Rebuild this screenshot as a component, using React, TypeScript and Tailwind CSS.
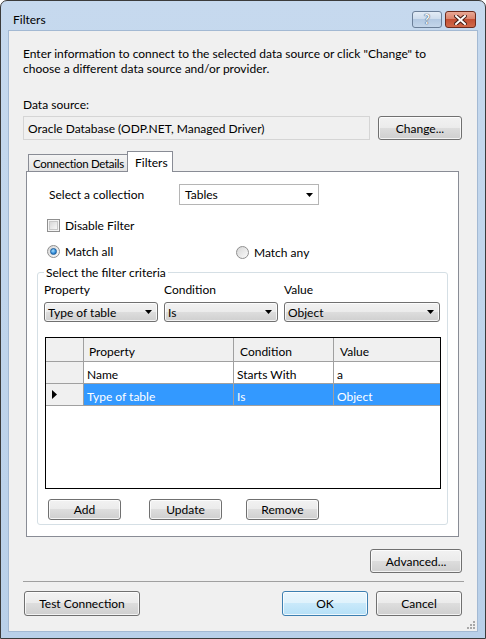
import type { ReactNode } from "react";

function Arrow() {
  return (
    <svg width="7" height="4" viewBox="0 0 7 4" className="shrink-0">
      <path d="M0 0H7L3.5 4Z" fill="#000" />
    </svg>
  );
}

function Button({
  children,
  className = "",
  primary = false,
}: {
  children: ReactNode;
  className?: string;
  primary?: boolean;
}) {
  return (
    <div
      className={`flex shrink-0 items-center justify-center rounded-[3px] border text-[12px] text-black shadow-[inset_0_0_0_1px_rgba(255,255,255,0.75)] ${
        primary
          ? "border-[#3c7fb1] bg-[image:linear-gradient(#eaf6fd_0%,#dff2fc_50%,#c9e9fa_50%,#b6e0f7_100%)]"
          : "border-[#707070] bg-[image:linear-gradient(#f2f2f2_0%,#ebebeb_50%,#dddddd_50%,#cfcfcf_100%)]"
      } ${className}`}
    >
      {children}
    </div>
  );
}

function DropButton({ value, className = "" }: { value: string; className?: string }) {
  return (
    <div
      className={`flex h-[20px] shrink-0 items-center justify-between rounded-[3px] border border-[#707070] bg-[image:linear-gradient(#f2f2f2_0%,#ebebeb_50%,#dddddd_50%,#cfcfcf_100%)] pl-[3px] pr-[5px] shadow-[inset_0_0_0_1px_rgba(255,255,255,0.75)] ${className}`}
    >
      <span>{value}</span>
      <Arrow />
    </div>
  );
}

function Check() {
  return (
    <div className="flex h-[13px] w-[13px] shrink-0 items-center justify-center border border-[#8f8f8f] bg-[#f4f4f4]">
      <div className="h-[9px] w-[9px] border border-[#c8c8c8] bg-[image:linear-gradient(135deg,#d8d8d8,#f7f7f7)]" />
    </div>
  );
}

function Radio({ on = false }: { on?: boolean }) {
  return (
    <div className="flex h-[13px] w-[13px] shrink-0 items-center justify-center rounded-full border border-[#8f8f8f] bg-[image:linear-gradient(135deg,#d6d6d6,#fbfbfb)]">
      {on && (
        <div className="h-[7px] w-[7px] rounded-full border border-[#1f5f9c] bg-[image:radial-gradient(circle_at_40%_35%,#a8e0ff,#2f8ad8_60%,#1c5fa6)]" />
      )}
    </div>
  );
}

export default function App() {
  return (
    <div className="h-[639px] w-[486px] bg-white font-[Lato,'Liberation_Sans',sans-serif] text-[12px] leading-[15px] text-black">
      <div className="flex h-[639px] w-[486px] flex-col rounded-t-[7px] border border-[#3b3b3b] bg-[image:linear-gradient(#c6d9ee,#b9d0e9)]">
        {/* title bar */}
        <div className="flex h-[30px] shrink-0 items-start justify-between pl-[12px] pr-[9px]">
          <span className="mt-[11px]">Filters</span>
          <div className="mt-[10px] flex gap-[3px]">
            <div className="flex h-[17px] w-[30px] items-center justify-center rounded-[3px] border border-[#6b7f98] bg-[image:linear-gradient(#e3ecf6_0%,#ccdbec_50%,#b3c9e2_50%,#c4d6ea_100%)] text-[13px] font-bold leading-none text-[#f4f7fb] [text-shadow:0_0_1px_#34465c,0_0_1px_#34465c]">
              ?
            </div>
            <div className="flex h-[17px] w-[31px] items-center justify-center rounded-[3px] border border-[#6d2a1c] bg-[image:linear-gradient(#e9a895_0%,#d98068_50%,#c44f33_50%,#d0694a_100%)]">
              <svg width="13" height="10" viewBox="0 0 13 10">
                <path d="M2 1L11 9M11 1L2 9" stroke="#4a2017" strokeWidth="4" strokeLinecap="square" />
                <path d="M2 1L11 9M11 1L2 9" stroke="#fff" strokeWidth="2" strokeLinecap="square" />
              </svg>
            </div>
          </div>
        </div>

        {/* client area */}
        <div className="flex flex-1 flex-col px-[8px] pb-[7px]">
          <div className="relative flex flex-1 flex-col bg-[#f0f0f0] pl-[14px] pr-[15px] pt-[15px] shadow-[0_0_0_1px_#a3b9d3]">
            <p className="h-[30px]">
              Enter information to connect to the selected data source or click "Change" to
              <br />
              choose a different data source and/or provider.
            </p>

            <div className="mt-[21px] h-[15px]">Data source:</div>
            <div className="mt-[4px] flex h-[24px] gap-[8px]">
              <div className="flex w-[347px] items-center border border-[#d5d5d5] bg-[#f0f0f0] pl-[4px]">
                Oracle Database (ODP.NET, Managed Driver)
              </div>
              <Button className="w-[84px]">Change...</Button>
            </div>

            {/* tabs */}
            <div className="ml-[3px] mt-[11px] w-[433px]">
              <div className="flex h-[20px] items-end pl-[2px]">
                <div className="flex h-[17px] w-[100px] items-center whitespace-nowrap border border-b-0 border-[#898c95] bg-[image:linear-gradient(#f4f4f4,#e2e2e2)] pl-[4px] text-[11.5px] tracking-[-0.3px]">
                  Connection Details
                </div>
                <div className="relative z-10 -mb-px -ml-px flex h-[21px] w-[46px] items-start border border-b-0 border-[#898c95] bg-white pl-[7px] pt-[3px]">
                  Filters
                </div>
              </div>

              <div className="flex h-[366px] flex-col border border-[#898c95] bg-white">
                <div className="mt-[12px] flex h-[21px] items-center pl-[22px]">
                  <span className="w-[130px]">Select a collection</span>
                  <div className="flex h-[21px] w-[140px] items-center justify-between border border-[#b5b5b5] bg-white pl-[5px] pr-[5px]">
                    <span>Tables</span>
                    <Arrow />
                  </div>
                </div>

                <div className="mt-[14px] flex h-[13px] items-center gap-[5px] pl-[20px]">
                  <Check />
                  <span>Disable Filter</span>
                </div>

                <div className="mt-[12px] flex h-[13px] items-start pl-[20px]">
                  <div className="flex w-[189px] items-center gap-[5px]">
                    <Radio on />
                    <span>Match all</span>
                  </div>
                  <div className="mt-[1px] flex items-center gap-[5px]">
                    <Radio />
                    <span>Match any</span>
                  </div>
                </div>

                {/* group box */}
                <div className="relative ml-[10px] mt-[15px] flex h-[253px] w-[411px] flex-col rounded-[3px] border border-[#d5dfe5]">
                  <span className="absolute -top-[8px] left-[6px] bg-white px-[2px]">Select the filter criteria</span>

                  <div className="mt-[9px] flex h-[15px] gap-[6px] pl-[6px]">
                    <span className="w-[114px]">Property</span>
                    <span className="w-[114px]">Condition</span>
                    <span className="w-[156px]">Value</span>
                  </div>
                  <div className="mt-[5px] flex gap-[6px] pl-[6px]">
                    <DropButton value="Type of table" className="w-[114px]" />
                    <DropButton value="Is" className="w-[114px]" />
                    <DropButton value="Object" className="w-[156px]" />
                  </div>

                  {/* data grid */}
                  <div className="ml-[7px] mt-[15px] h-[152px] w-[396px] border border-black bg-white">
                    <div className="grid h-[24px] grid-cols-[38px_150px_100px_1fr] border-b border-[#a0a0a0] bg-[#f0f0f0]">
                      <div className="border-r border-[#a0a0a0]" />
                      <div className="border-r border-[#a0a0a0] pl-[5px] pt-[6px]">Property</div>
                      <div className="border-r border-[#a0a0a0] pl-[6px] pt-[6px]">Condition</div>
                      <div className="pl-[6px] pt-[6px]">Value</div>
                    </div>
                    <div className="grid h-[22px] grid-cols-[38px_150px_100px_1fr] border-b border-[#a0a0a0]">
                      <div className="border-r border-[#a0a0a0] bg-[#f0f0f0]" />
                      <div className="border-r border-[#a0a0a0] pl-[3px] pt-[5px]">Name</div>
                      <div className="border-r border-[#a0a0a0] pl-[3px] pt-[5px]">Starts With</div>
                      <div className="pl-[3px] pt-[5px]">a</div>
                    </div>
                    <div className="grid h-[22px] grid-cols-[38px_150px_100px_1fr] border-b border-[#a0a0a0]">
                      <div className="flex items-center border-r border-[#a0a0a0] bg-[#f0f0f0] pl-[6px]">
                        <svg width="5" height="9" viewBox="0 0 5 9">
                          <path d="M0 0L5 4.5L0 9Z" fill="#000" />
                        </svg>
                      </div>
                      <div className="border-r border-[#a0a0a0] bg-[#3399ff] pl-[3px] pt-[5px] text-white">Type of table</div>
                      <div className="border-r border-[#a0a0a0] bg-[#3399ff] pl-[3px] pt-[5px] text-white">Is</div>
                      <div className="bg-[#3399ff] pl-[3px] pt-[5px] text-white">Object</div>
                    </div>
                  </div>

                  <div className="mt-[10px] flex h-[21px]">
                    <Button className="ml-[10px] w-[73px]">Add</Button>
                    <Button className="ml-[28px] w-[73px]">Update</Button>
                    <Button className="ml-[24px] w-[73px]">Remove</Button>
                  </div>
                </div>
              </div>
            </div>

            <div className="mt-[12px] flex h-[24px] justify-end">
              <Button className="w-[92px]">Advanced...</Button>
            </div>

            <div className="-mr-[2px] mt-[8px] h-px bg-[#a0a0a0]" />

            <div className="mt-[9px] flex h-[25px] items-stretch">
              <Button className="ml-[1px] w-[116px]">Test Connection</Button>
              <div className="flex-1" />
              <Button primary className="w-[86px]">
                OK
              </Button>
              <Button className="ml-[8px] w-[86px]">Cancel</Button>
            </div>

            {/* size grip */}
            <svg className="absolute bottom-[2px] right-[2px]" width="8" height="8" viewBox="0 0 8 8">
              <g fill="#a8a8a8">
                <rect x="6" y="0" width="2" height="2" />
                <rect x="3" y="3" width="2" height="2" />
                <rect x="6" y="3" width="2" height="2" />
                <rect x="0" y="6" width="2" height="2" />
                <rect x="3" y="6" width="2" height="2" />
                <rect x="6" y="6" width="2" height="2" />
              </g>
            </svg>
          </div>
        </div>
      </div>
    </div>
  );
}
